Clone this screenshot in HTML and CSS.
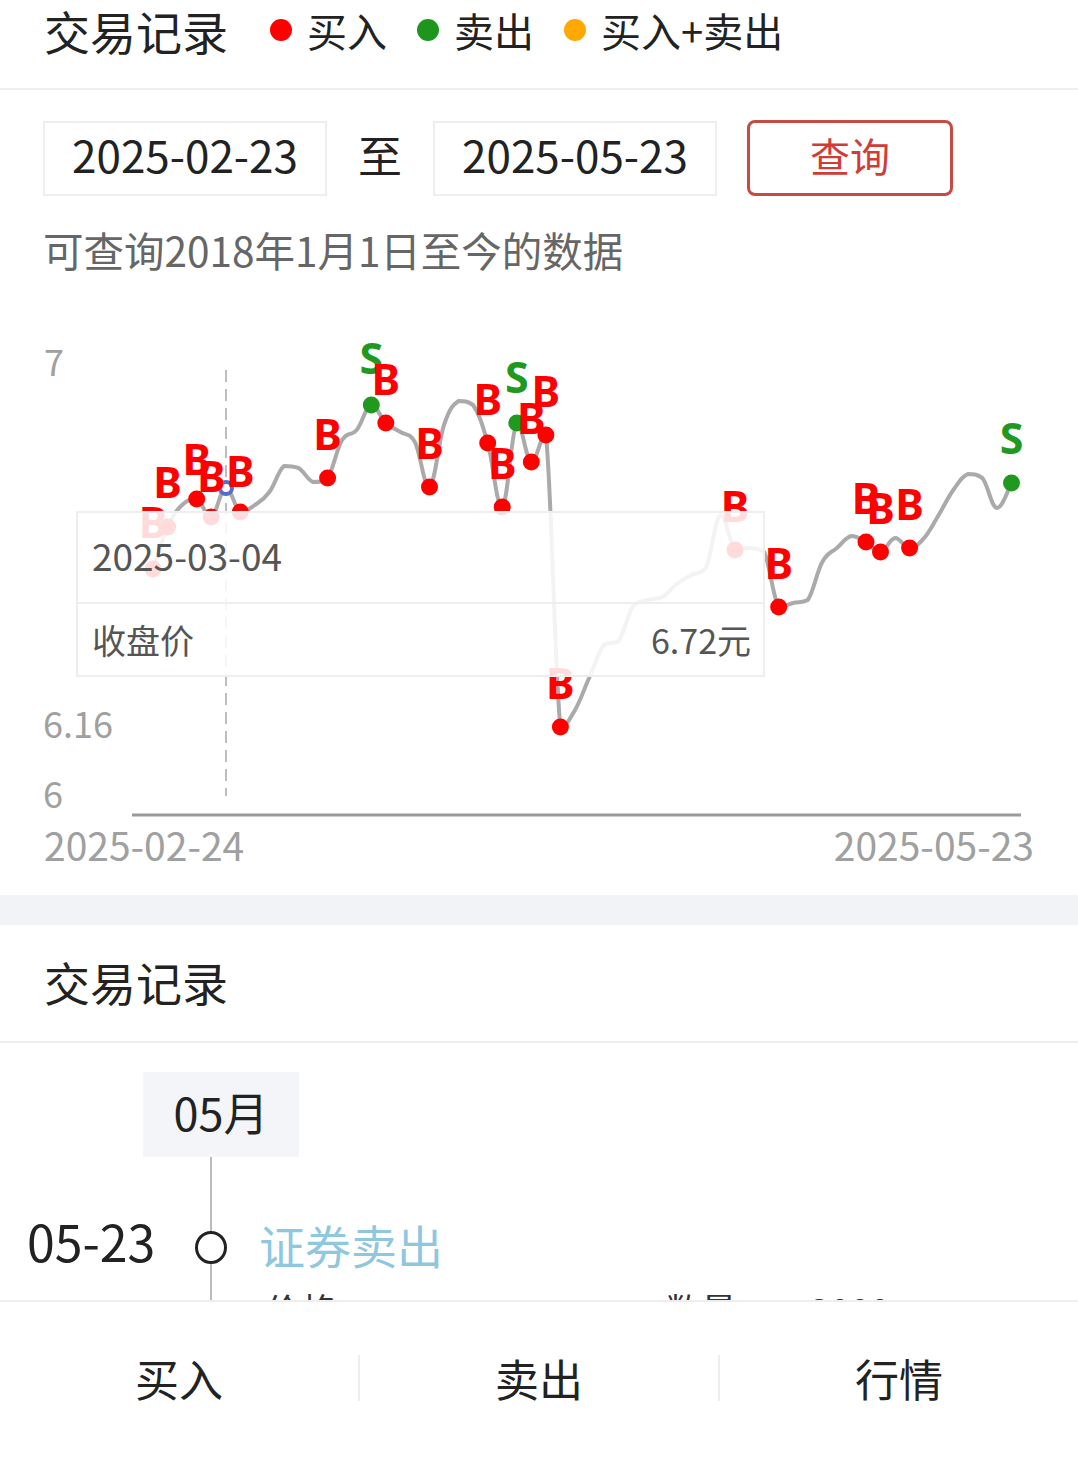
FILE: index.html
```html
<!DOCTYPE html>
<html lang="zh-CN">
<head>
<meta charset="utf-8">
<title>交易记录</title>
<link rel="stylesheet" href="styles.css">
</head>
<body>
<div class="page">
  <header class="legend-bar">
    <h1 class="title">交易记录</h1>
    <span class="legend-item"><i class="dot dot-buy"></i>买入</span>
    <span class="legend-item"><i class="dot dot-sell"></i>卖出</span>
    <span class="legend-item"><i class="dot dot-both"></i>买入+卖出</span>
  </header>

  <section class="query">
    <div class="date-row">
      <div class="date-box">2025-02-23</div>
      <span class="to">至</span>
      <div class="date-box">2025-05-23</div>
      <button class="query-btn" type="button">查询</button>
    </div>
    <p class="hint">可查询2018年1月1日至今的数据</p>
  </section>

  <section class="chart">
    <svg class="chart-svg" width="1078" height="625" viewBox="0 270 1078 625" xmlns="http://www.w3.org/2000/svg">
      <text class="axis-label" x="44" y="376">7</text>
      <text class="axis-label" x="43" y="738">6.16</text>
      <text class="axis-label" x="43" y="808">6</text>
      <line class="pointer-line" x1="226" y1="370" x2="226" y2="796"/>
      <line class="axis-line" x1="132" y1="815" x2="1021" y2="815"/>
      <text class="axis-label x-label" x="44" y="861">2025-02-24</text>
      <text class="axis-label x-label" x="1034" y="861" text-anchor="end">2025-05-23</text>

      <path id="price-line" class="price-line" d="M153 569"/>
      <circle class="hover-pt" cx="226" cy="488" r="6"/>

      <circle class="pt-buy" cx="153" cy="569" r="8.5"/>
      <circle class="pt-buy" cx="167.6" cy="527" r="8.5"/>
      <circle class="pt-buy" cx="196.7" cy="499" r="8.5"/>
      <circle class="pt-buy" cx="211.2" cy="517" r="8.5"/>
      <circle class="pt-buy" cx="240.3" cy="512" r="8.5"/>
      <circle class="pt-buy" cx="327.6" cy="478" r="8.5"/>
      <circle class="pt-sell" cx="371.3" cy="405" r="8.5"/>
      <circle class="pt-buy" cx="385.8" cy="423" r="8.5"/>
      <circle class="pt-buy" cx="429.5" cy="487" r="8.5"/>
      <circle class="pt-buy" cx="487.7" cy="443" r="8.5"/>
      <circle class="pt-buy" cx="502.2" cy="507" r="8.5"/>
      <circle class="pt-sell" cx="516.8" cy="423" r="8.5"/>
      <circle class="pt-buy" cx="531.3" cy="462" r="8.5"/>
      <circle class="pt-buy" cx="545.9" cy="435" r="8.5"/>
      <circle class="pt-buy" cx="560.4" cy="727" r="8.5"/>
      <circle class="pt-buy" cx="735" cy="550" r="8.5"/>
      <circle class="pt-buy" cx="778.7" cy="607" r="8.5"/>
      <circle class="pt-buy" cx="866" cy="542" r="8.5"/>
      <circle class="pt-buy" cx="880.5" cy="552" r="8.5"/>
      <circle class="pt-buy" cx="909.6" cy="548" r="8.5"/>
      <circle class="pt-sell" cx="1011.5" cy="483" r="8.5"/>

      <text class="mark-label lbl-buy" x="153" y="538">B</text>
      <text class="mark-label lbl-buy" x="167.6" y="498">B</text>
      <text class="mark-label lbl-buy" x="196.7" y="475">B</text>
      <text class="mark-label lbl-buy" x="211.2" y="492">B</text>
      <text class="mark-label lbl-buy" x="240.3" y="487">B</text>
      <text class="mark-label lbl-buy" x="327.6" y="450">B</text>
      <text class="mark-label lbl-sell" x="371.3" y="374">S</text>
      <text class="mark-label lbl-buy" x="385.8" y="395">B</text>
      <text class="mark-label lbl-buy" x="429.5" y="459">B</text>
      <text class="mark-label lbl-buy" x="487.7" y="415">B</text>
      <text class="mark-label lbl-buy" x="502.2" y="479">B</text>
      <text class="mark-label lbl-sell" x="516.8" y="393">S</text>
      <text class="mark-label lbl-buy" x="531.3" y="434">B</text>
      <text class="mark-label lbl-buy" x="545.9" y="407">B</text>
      <text class="mark-label lbl-buy" x="560.4" y="699">B</text>
      <text class="mark-label lbl-buy" x="735" y="522">B</text>
      <text class="mark-label lbl-buy" x="778.7" y="579">B</text>
      <text class="mark-label lbl-buy" x="866" y="514">B</text>
      <text class="mark-label lbl-buy" x="880.5" y="524">B</text>
      <text class="mark-label lbl-buy" x="909.6" y="520">B</text>
      <text class="mark-label lbl-sell" x="1011.5" y="454">S</text>
    </svg>

    <div class="tooltip">
      <div class="tt-date">2025-03-04</div>
      <div class="tt-row"><span>收盘价</span><span>6.72元</span></div>
    </div>
  </section>

  <div class="gap"></div>

  <section class="records">
    <h2 class="records-title">交易记录</h2>
    <div class="month">05月</div>
    <div class="tl-row tl-spacer">
      <span></span><span class="tl-track"></span><span></span>
    </div>
    <div class="tl-row tl-entry">
      <span class="entry-date">05-23</span>
      <span class="tl-track node-cell"><span class="node"></span></span>
      <span class="entry-type">证券卖出</span>
    </div>
    <div class="tl-row tl-detail">
      <span></span>
      <span class="tl-track"></span>
      <div class="detail">
        <span class="d-label">价格</span>
        <span class="d-mid">交</span>
        <span class="d-label2">数量</span>
        <span class="d-value">2000</span>
      </div>
    </div>
  </section>
</div>

<nav class="bottom-bar">
  <span class="tab">买入</span>
  <span class="tab">卖出</span>
  <span class="tab">行情</span>
</nav>

<script src="script.js"></script>
</body>
</html>
```

FILE: styles.css
```css
* { box-sizing: border-box; }

html, body {
  margin: 0;
  padding: 0;
  background: #ffffff;
}

body {
  width: 1078px;
  overflow: hidden;
  font-family: "Noto Sans CJK SC", "Noto Sans", sans-serif;
  color: #222222;
}

/* header / legend */
.legend-bar {
  display: flex;
  align-items: center;
  height: 90px;
  padding: 0 0 29px 44px;
  border-bottom: 2px solid #eeeeee;
}

.title {
  margin: 0 42px 0 0;
  font-size: 46px;
  font-weight: 400;
  line-height: 1;
  color: #222222;
}

.legend-item {
  display: flex;
  align-items: center;
  margin-right: 30px;
  font-size: 40px;
  line-height: 1;
  color: #222222;
}

.dot {
  display: block;
  width: 22px;
  height: 22px;
  border-radius: 50%;
  margin-right: 15px;
}

.dot-buy { background: #ff0000; }
.dot-sell { background: #1e961e; }
.dot-both { background: #ffa800; }

/* query */
.query {
  padding: 30px 0 0 43px;
}

.date-row {
  display: flex;
  align-items: center;
}

.date-box {
  width: 284px;
  height: 75px;
  padding-bottom: 8px;
  border: 2px solid #eeeeee;
  display: flex;
  align-items: center;
  justify-content: center;
  font-size: 44px;
  line-height: 1;
  color: #222222;
}

.to {
  width: 106px;
  padding-bottom: 8px;
  text-align: center;
  font-size: 44px;
  line-height: 1;
}

.query-btn {
  margin-left: 30px;
  width: 206px;
  height: 76px;
  padding: 0 0 6px;
  border: 3px solid #c84a45;
  border-radius: 8px;
  background: #ffffff;
  color: #d23c36;
  font-family: inherit;
  font-size: 40px;
  line-height: 1;
}

.hint {
  margin: 34px 0 0 0;
  font-size: 40.5px;
  line-height: 40px;
  color: #666666;
}

/* chart */
.chart {
  position: relative;
  height: 625px;
}

.chart-svg { display: block; }

.axis-label {
  font-family: "Noto Sans CJK SC", sans-serif;
  font-size: 36px;
  fill: #a0a0a0;
}

.x-label { font-size: 39px; }

.pointer-line {
  stroke: #bdbdbd;
  stroke-width: 2;
  stroke-dasharray: 12 7;
}

.axis-line {
  stroke: #9a9a9a;
  stroke-width: 3;
}

.price-line {
  fill: none;
  stroke: #aaaaaa;
  stroke-width: 4;
  stroke-linejoin: round;
  stroke-linecap: round;
}

.hover-pt {
  fill: #ffffff;
  stroke: #5470c6;
  stroke-width: 4;
}

.pt-buy { fill: #ff0000; }
.pt-sell { fill: #1f9a1f; }

.mark-label {
  font-family: "Noto Sans", "Liberation Sans", sans-serif;
  font-weight: 700;
  font-size: 43px;
  text-anchor: middle;
}

.lbl-buy { fill: #ff0000; }
.lbl-sell { fill: #1f9a1f; }

.tooltip {
  position: absolute;
  left: 76px;
  top: 241px;
  width: 689px;
  height: 166px;
  border: 2px solid #eeeeee;
  background: rgba(255, 255, 255, 0.86);
  color: #555555;
  font-size: 34px;
  line-height: 1;
}

.tt-date {
  height: 91px;
  padding: 0 14px 4px;
  display: flex;
  align-items: center;
  border-bottom: 2px solid #eeeeee;
  font-size: 37px;
}

.tt-row {
  height: 71px;
  padding: 0 12px 0 14px;
  display: flex;
  align-items: center;
  justify-content: space-between;
}

/* gap band */
.gap {
  height: 30px;
  background: #f2f3f7;
}

/* records */
.records-title {
  margin: 0;
  padding: 33px 0 37px 44px;
  font-size: 46px;
  font-weight: 400;
  line-height: 46px;
  color: #222222;
  border-bottom: 2px solid #eeeeee;
}

.month {
  margin: 29px 0 0 143px;
  width: 156px;
  height: 85px;
  padding-bottom: 6px;
  background: #f4f5f9;
  display: flex;
  align-items: center;
  justify-content: center;
  font-size: 45px;
  line-height: 1;
  color: #222222;
}

.tl-row {
  display: grid;
  grid-template-columns: 195px 32px 1fr;
}

.tl-track {
  background: linear-gradient(#bbbbbb, #bbbbbb) center / 2px 100% no-repeat;
}

.tl-spacer { height: 58px; }

.tl-entry {
  height: 64px;
  align-items: center;
}

.tl-entry .tl-track {
  height: 100%;
  display: flex;
  align-items: center;
  justify-content: center;
}

.entry-date {
  padding: 0 0 14px 27px;
  font-size: 50px;
  line-height: 1;
  color: #222222;
}

.node {
  display: block;
  width: 32px;
  height: 33px;
  border: 3px solid #222222;
  border-radius: 50%;
  background: #ffffff;
}

.entry-type {
  padding: 0 0 6px 32px;
  font-size: 46px;
  line-height: 1;
  color: #8fc7df;
}

.tl-detail { height: 120px; }

.detail {
  display: flex;
  padding: 12px 0 0 38px;
  font-size: 36px;
  line-height: 1;
  color: #333333;
}

.d-label { width: 215px; }
.d-mid { width: 185px; font-size: 20px; padding-top: 10px; }
.d-label2 { width: 145px; }
.d-value { font-size: 36px; }

/* bottom bar */
.bottom-bar {
  position: fixed;
  left: 0;
  right: 0;
  bottom: 0;
  height: 158px;
  padding-bottom: 4px;
  border-top: 2px solid #eeeeee;
  background: #ffffff;
  display: flex;
  align-items: center;
}

.tab {
  flex: 1;
  height: 46px;
  display: flex;
  align-items: center;
  justify-content: center;
  font-size: 44px;
  line-height: 1;
  color: #222222;
}

.tab + .tab { border-left: 2px solid #eeeeee; }
```

FILE: script.js
```js
(function () {
  var ys = [569,527,505,499,517,488,512,505,492,466,
            468,482,478,440,430,405,423,432,442,487,
            425,401,405,443,507,423,462,435,727,710,
            677,645,641,606,600,597,584,575,568,515,
            550,548,552,607,603,600,562,548,536,542,
            552,538,548,538,515,490,474,478,508,483];
  var pts = ys.map(function (y, i) { return [153 + 14.55 * i, y]; });
  var s = 0.2;
  function clamp(v, a, b) {
    var lo = Math.min(a, b), hi = Math.max(a, b);
    return Math.max(lo, Math.min(hi, v));
  }
  var d = 'M' + pts[0][0].toFixed(1) + ' ' + pts[0][1];
  for (var i = 0; i < pts.length - 1; i++) {
    var p0 = pts[i - 1] || pts[i];
    var p1 = pts[i];
    var p2 = pts[i + 1];
    var p3 = pts[i + 2] || p2;
    var c1x = p1[0] + (p2[0] - p0[0]) * s;
    var c1y = clamp(p1[1] + (p2[1] - p0[1]) * s, p1[1], p2[1]);
    var c2x = p2[0] - (p3[0] - p1[0]) * s;
    var c2y = clamp(p2[1] - (p3[1] - p1[1]) * s, p1[1], p2[1]);
    d += ' C' + c1x.toFixed(1) + ' ' + c1y.toFixed(1) + ' ' +
         c2x.toFixed(1) + ' ' + c2y.toFixed(1) + ' ' +
         p2[0].toFixed(1) + ' ' + p2[1].toFixed(1);
  }
  document.getElementById('price-line').setAttribute('d', d);
})();
```
